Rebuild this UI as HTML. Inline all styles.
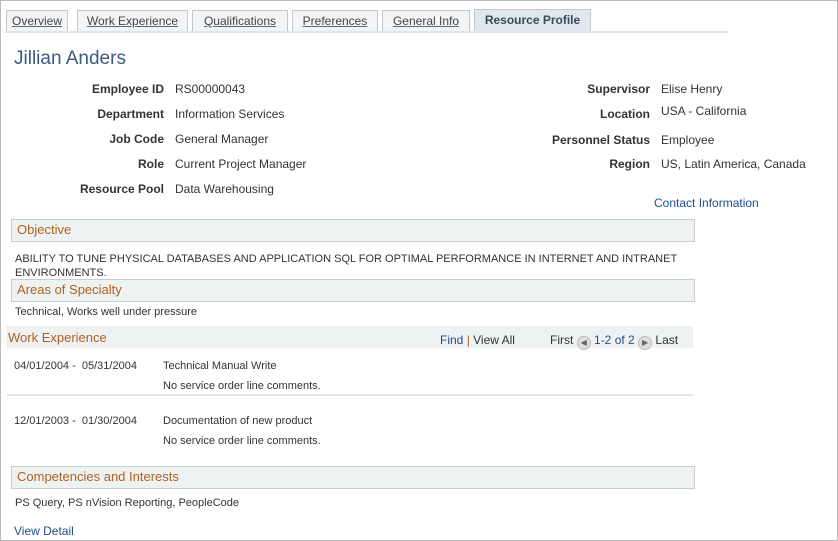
<!DOCTYPE html>
<html><head><style>
body{margin:0;width:838px;height:541px;position:relative;font-family:"Liberation Sans",Arial,sans-serif;font-size:12px;color:#333;background:#fff;overflow:hidden}
.a{position:absolute;white-space:nowrap}
.frame{position:absolute;left:0;top:0;width:836px;height:539px;border:1px solid #bbb}
.tab{position:absolute;top:10px;height:20px;border:1px solid #c4c8cc;border-bottom:none;background:#f2f4f5;color:#444;font-size:12px;line-height:21px;text-align:center;text-decoration:underline;text-decoration-color:#666}
.tab.sel{background:#dfe7ef;font-weight:bold;text-decoration:none;color:#3a4a5a;height:22px;top:9px}
.lbl{position:absolute;font-weight:bold;text-align:right;white-space:nowrap}
.hd{position:absolute;left:11px;background:#eef2f3;border:1px solid #c9cdd0;color:#b35f1e;font-size:13px;line-height:19px;padding-left:5px;box-sizing:border-box;width:684px;height:23px}
.lnk{color:#1e4f8b}
</style></head><body>
<div class="frame"></div>
<div class="tab" style="left:6px;width:60px">Overview</div>
<div class="tab" style="left:77px;width:109px">Work Experience</div>
<div class="tab" style="left:192px;width:94px">Qualifications</div>
<div class="tab" style="left:292px;width:84px">Preferences</div>
<div class="tab" style="left:382px;width:86px">General Info</div>
<div class="tab sel" style="left:474px;width:115px">Resource Profile</div>
<div class="a" style="left:4px;top:31px;width:724px;height:2px;background:#dde6ef"></div>
<div class="a" style="left:14px;top:48px;font-size:19px;color:#3c5a82">Jillian Anders</div>

<div class="lbl" style="right:674px;top:82px">Employee ID</div><div class="a" style="left:175px;top:82px">RS00000043</div>
<div class="lbl" style="right:674px;top:107px">Department</div><div class="a" style="left:175px;top:107px">Information Services</div>
<div class="lbl" style="right:674px;top:132px">Job Code</div><div class="a" style="left:175px;top:132px">General Manager</div>
<div class="lbl" style="right:674px;top:157px">Role</div><div class="a" style="left:175px;top:157px">Current Project Manager</div>
<div class="lbl" style="right:674px;top:182px">Resource Pool</div><div class="a" style="left:175px;top:182px">Data Warehousing</div>

<div class="lbl" style="right:188px;top:82px">Supervisor</div><div class="a" style="left:661px;top:82px">Elise Henry</div>
<div class="lbl" style="right:188px;top:107px">Location</div><div class="a" style="left:661px;top:104px">USA - California</div>
<div class="lbl" style="right:188px;top:133px">Personnel Status</div><div class="a" style="left:661px;top:133px">Employee</div>
<div class="lbl" style="right:188px;top:157px">Region</div><div class="a" style="left:661px;top:157px">US, Latin America, Canada</div>
<div class="a lnk" style="left:654px;top:196px">Contact Information</div>

<div class="hd" style="top:219px">Objective</div>
<div class="a" style="left:15px;top:252px;font-size:11px;line-height:14px;white-space:normal;width:670px">ABILITY TO TUNE PHYSICAL DATABASES AND APPLICATION SQL FOR OPTIMAL PERFORMANCE IN INTERNET AND INTRANET ENVIRONMENTS.</div>
<div class="hd" style="top:279px">Areas of Specialty</div>
<div class="a" style="left:15px;top:306px;font-size:11px">Technical, Works well under pressure</div>

<div class="a" style="left:6px;top:326px;width:687px;height:22px;background:#eef2f3"></div>
<div class="a" style="left:8px;top:330px;font-size:13px;color:#b35f1e">Work Experience</div>
<div class="a" style="left:440px;top:333px"><span class="lnk">Find</span> <span style="color:#b35f1e">|</span> View All</div>
<div class="a" style="left:550px;top:333px">First <span style="display:inline-block;width:12px;height:12px;border-radius:50%;background:#ddd;border:1px solid #bbb;vertical-align:-1px;font-size:8px;line-height:12px;text-align:center;color:#666">◀</span> <span class="lnk">1-2 of 2</span> <span style="display:inline-block;width:12px;height:12px;border-radius:50%;background:#ddd;border:1px solid #bbb;vertical-align:-1px;font-size:8px;line-height:12px;text-align:center;color:#666">▶</span> Last</div>

<div class="a" style="left:14px;top:360px;font-size:11px">04/01/2004 -&nbsp; 05/31/2004</div>
<div class="a" style="left:163px;top:360px;font-size:11px">Technical Manual Write</div>
<div class="a" style="left:163px;top:380px;font-size:11px">No service order line comments.</div>
<div class="a" style="left:7px;top:394px;width:686px;height:2px;background:#e4e4e4"></div>
<div class="a" style="left:14px;top:415px;font-size:11px">12/01/2003 -&nbsp; 01/30/2004</div>
<div class="a" style="left:163px;top:415px;font-size:11px">Documentation of new product</div>
<div class="a" style="left:163px;top:435px;font-size:11px">No service order line comments.</div>

<div class="hd" style="top:466px">Competencies and Interests</div>
<div class="a" style="left:15px;top:497px;font-size:11px">PS Query, PS nVision Reporting, PeopleCode</div>
<div class="a lnk" style="left:14px;top:524px">View Detail</div>
</body></html>
